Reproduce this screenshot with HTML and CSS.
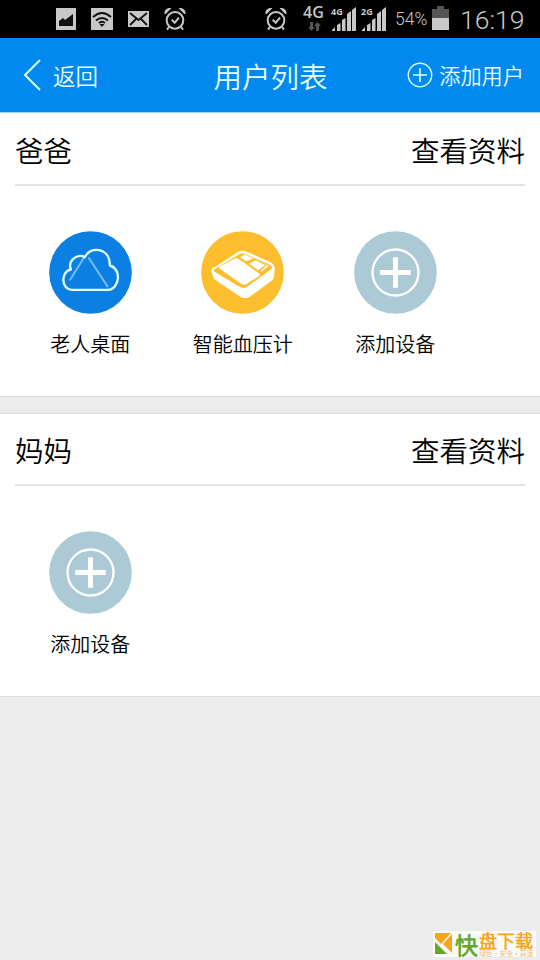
FILE: index.html
```html
<!DOCTYPE html>
<html lang="zh-CN">
<head>
<meta charset="utf-8">
<title>用户列表</title>
<link rel="stylesheet" href="styles.css">
</head>
<body>
<svg class="defs" width="0" height="0">
  <symbol id="alarm" viewBox="0 0 66 72">
    <g fill="none" stroke="#c8c8c8" stroke-width="6">
      <circle cx="33" cy="40" r="25"/>
      <path d="M23 38l9 9 13-15M15 60l-6 8M51 60l6 8"/>
    </g>
    <path d="M1 20C1 8 12 1 22 4L5 21zM65 20C65 8 54 1 44 4L61 21z" fill="#c8c8c8"/>
  </symbol>
  <symbol id="signal" viewBox="0 0 24 24">
    <path d="M0 24v-1l3-3v4zM5 24v-6l3.500-2v8zM10 24V13l3.500-2v13zM15 24V7l4-3v20zM20 24V3l4-3v24z" fill="#c8c8c8"/>
  </symbol>
  <symbol id="add" viewBox="55.5 32.5 249 249">
    <circle cx="180" cy="157" r="124" fill="#abcad5"/>
    <circle cx="180" cy="157" r="69" fill="none" stroke="#fff" stroke-width="7"/>
    <path d="M180 111v92M134 157h92" stroke="#fff" stroke-width="15"/>
  </symbol>
</svg>

<div class="status">
  <div class="notices">
    <svg width="20" height="22" viewBox="0 0 20 22"><path fill="#c8c8c8" d="M0 0h20v22H0z"/><path fill="#111" d="M3 18v-5l4-3 2 2 8-6v12z"/></svg>
    <svg width="22" height="22" viewBox="0 0 22 22"><path fill="#c8c8c8" d="M0 0h22v22H0z"/><path d="M2 9q9-8 18 0M5 12.500q6-5 12 0M8 15q3-2.500 6 0" fill="none" stroke="#111" stroke-width="2"/><path d="M8.500 16h5L11 19z" fill="#111"/></svg>
    <svg width="21" height="16" viewBox="0 0 21 16"><path fill="#c8c8c8" d="M0 0h21v16H0z"/><path d="M2 2l8.500 7L19 2M2 14l6-6M19 14l-6-6" fill="none" stroke="#111" stroke-width="1.800"/></svg>
    <svg width="22" height="24"><use href="#alarm"/></svg>
  </div>
  <div class="system">
    <svg class="clock-icon" width="22" height="24"><use href="#alarm"/></svg>
    <div class="network">
      <span>4G</span>
      <svg width="13" height="9" viewBox="0 0 13 9"><path d="M3.500 9L0 5h2V0h3v5h2zM9.500 0L13 4h-2v5H8V4H6z" fill="#555"/></svg>
    </div>
    <div class="sim"><span>4G</span><svg width="24" height="24"><use href="#signal"/></svg></div>
    <div class="sim sim-two"><span>2G</span><svg width="24" height="24"><use href="#signal"/></svg></div>
    <span class="percent">54%</span>
    <svg class="battery" width="17" height="24" viewBox="0 0 17 24"><path d="M5 0h7v3h5v10H0V3h5z" fill="#555"/><path d="M0 12h17v12H0z" fill="#c8c8c8"/></svg>
    <span class="time">16:19</span>
  </div>
</div>

<header class="header">
  <div class="back"><svg width="18" height="34" viewBox="0 0 18 34"><path d="M17 2L2 17l15 15" fill="none" stroke="#d9ffff" stroke-width="2"/></svg><span>返回</span></div>
  <h1 class="title">用户列表</h1>
  <div class="add-user"><svg width="26" height="26" viewBox="0 0 26 26"><path d="M13 6v14M6 13h14" stroke="#d9ffff" stroke-width="1.600"/><circle cx="13" cy="13" r="11.700" fill="none" stroke="#d9ffff" stroke-width="1.400"/></svg><span>添加用户</span></div>
</header>

<main>
  <section class="card">
    <div class="card-head"><span>爸爸</span><span>查看资料</span></div>
    <div class="devices">
      <div class="device">
        <svg viewBox="55.5 32.5 249 249">
          <circle cx="180" cy="157" r="124" fill="#0b80e2"/>
          <path d="M118 180L160 113M174 112L232 200" fill="none" stroke="#75bdf5" stroke-width="6"/>
          <path d="M124 209C90 207 91 153 121 148C111 121 141 99 163 111C176 78 239 79 238 136C275 146 267 207 233 209Z" fill="none" stroke="#e4ffff" stroke-width="7" stroke-linejoin="round"/>
        </svg>
        <span>老人桌面</span>
      </div>
      <div class="device">
        <svg viewBox="48.500 32.500 249 249">
          <circle cx="173" cy="157" r="124" fill="#fcbe2c"/>
          <path d="M80 153Q79 144 89 141L160 95Q170 90 182 93L257 126Q269 132 270 146L267 171Q266 178 257 184L196 229Q181 240 165 229L94 181Q85 175 84 168Z" fill="#fff"/>
          <path d="M88 148L162 103Q171 98 180 101L255 134Q267 140 257 149L188 199Q176 207 164 200L89 155Q84 151 88 148Z" fill="#fcbe2c"/>
          <path d="M104 140L151 114Q156 112 160 115L223 160Q227 164 222 168L184 192Q177 196 171 192L105 146Q100 143 104 140Z" fill="#fff"/>
          <path d="M166 111L180 103 252 137 230 155Z" fill="#fff"/>
          <path d="M183 123L208 114 246 135 225 155Z" fill="#fcbe2c"/>
          <path d="M192 131L213 120 241 135 220 150Z" fill="#fff"/>
        </svg>
        <span>智能血压计</span>
      </div>
      <div class="device"><svg><use href="#add"/></svg><span>添加设备</span></div>
    </div>
  </section>
  <section class="card">
    <div class="card-head"><span>妈妈</span><span>查看资料</span></div>
    <div class="devices">
      <div class="device"><svg><use href="#add"/></svg><span>添加设备</span></div>
    </div>
  </section>
</main>

<div class="brand">
  <svg width="18" height="21" viewBox="0 0 18 21"><path d="M0 0h16L6 11 0 5z" fill="#f7a51c"/><path d="M0 9l12 12H0z" fill="#62a82c"/><path d="M17 1v19L8 11z" fill="#f7a51c"/></svg>
  <div class="brand-first">快</div>
  <div class="brand-text">
    <div class="brand-name">盘下载</div>
    <div class="brand-tag">绿色·安全·高速</div>
  </div>
</div>
</body>
</html>
```

FILE: styles.css
```css
* { box-sizing: border-box; }
body {
  margin: 0;
  width: 540px;
  height: 960px;
  overflow: hidden;
  position: relative;
  background: #ececec;
  color: #000;
  font-family: "Noto Sans CJK SC DemiLight", "Noto Sans CJK SC", sans-serif;
  font-weight: 350;
}
svg { display: block; flex: none; }
.defs { position: absolute; }
.status {
  height: 38px;
  display: flex;
  justify-content: space-between;
  background: #000;
  color: #c8c8c8;
  font-family: Roboto, sans-serif;
  line-height: 1;
}
.notices {
  display: flex;
  align-items: center;
  gap: 15px;
  padding-left: 56px;
}
.system {
  display: flex;
  align-items: flex-start;
  width: 276px;
}
.clock-icon { margin: 7px 0 0 1px; }
.network {
  width: 21px;
  margin: 5px 0 0 16px;
  font: 600 16px/15px "Open Sans", sans-serif;
}
.network span { display: block; }
.network svg { margin: 2px 0 0 5px; }
.sim {
  position: relative;
  margin: 7px 0 0 8px;
}
.sim-two { margin-left: 6px; }
.sim span {
  position: absolute;
  left: -1px;
  top: 0;
  font: bold 9px/9px "Open Sans", sans-serif;
}
.percent {
  width: 32px;
  margin: 11px 0 0 9px;
  font-size: 17.500px;
}
.battery { margin: 6px 0 0 5px; }
.time {
  margin: 7px 0 0 11px;
  font-size: 26.500px;
}
.header {
  height: 75px;
  display: grid;
  grid-template-columns: 1fr auto 1fr;
  align-items: center;
  padding: 0 16px 0 17px;
  background: #0289ef;
  border-bottom: 1px solid #a6d8fb;
  color: #e6ffff;
}
.back, .add-user { display: flex; align-items: center; }
.back { gap: 12px; padding-left: 6px; font-size: 22.500px; }
.back span, .add-user span { margin-top: -1px; }
.title {
  margin: 0;
  font-size: 28.500px;
  font-weight: inherit;
}
.add-user { justify-content: flex-end; gap: 6px; font-size: 21.200px; }
.card {
  height: 284px;
  padding: 0 15px;
  background: #fff;
  border-bottom: 1px solid #dcdcdc;
}
.card + .card {
  margin-top: 16px;
  border-top: 1px solid #dcdcdc;
}
.card-head {
  height: 73px;
  display: flex;
  align-items: center;
  justify-content: space-between;
  padding-top: 1px;
  border-bottom: 2px solid #e3e3e3;
  font-size: 28.500px;
}
.card + .card .card-head { height: 72px; }
.devices {
  display: flex;
  padding-top: 45px;
  margin-left: -1px;
}
.device {
  width: 152.500px;
  display: flex;
  flex-direction: column;
  align-items: center;
  font-size: 20px;
  line-height: 30px;
}
.device svg { width: 83px; height: 83px; }
.device span { margin-top: 15px; }
.brand {
  position: absolute;
  left: 433px;
  top: 931px;
  width: 103px;
  height: 26px;
  display: flex;
  gap: 2px;
  padding: 2px 0 0 2px;
  background: #fafafa;
  font-weight: 700;
  white-space: nowrap;
}
.brand-first {
  width: 22px;
  color: #62a82c;
  font-size: 23px;
  line-height: 22px;
}
.brand-name {
  color: #f7a51c;
  font-size: 18px;
  line-height: 15px;
}
.brand-tag {
  margin-top: 2px;
  color: #f3b968;
  font-size: 6.800px;
  font-weight: 400;
  line-height: 7px;
}
```
